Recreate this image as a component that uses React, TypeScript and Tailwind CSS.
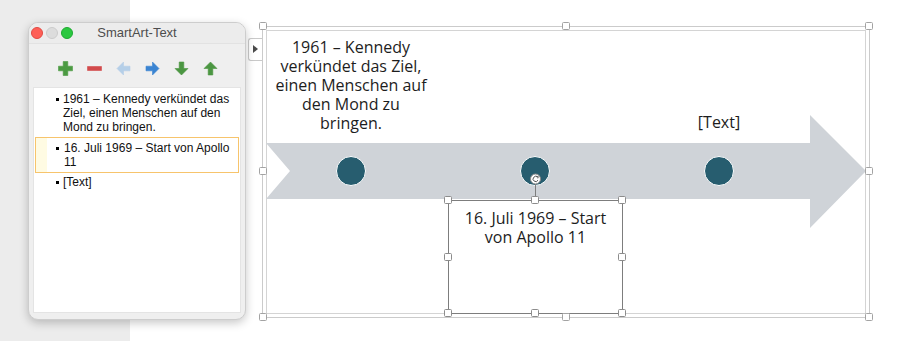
import React from "react";

const frameHandles: [number, number][] = [
  [263, 26], [566, 26], [869, 26],
  [263, 171], [869, 171],
  [263, 317], [566, 317], [869, 317],
];

const boxHandles: [number, number][] = [
  [448, 200], [535, 200], [622, 200],
  [448, 257], [622, 257],
  [448, 313], [535, 313], [622, 313],
];

function ToolIcon({ kind }: { kind: string }) {
  const paths: Record<string, { d: string; fill: string }> = {
    plus: { d: "M5.2 0.5 H9.8 V5.2 H14.5 V9.8 H9.8 V14.5 H5.2 V9.8 H0.5 V5.2 H5.2 Z", fill: "#4b9a42" },
    minus: { d: "M0.5 5.5 H14.5 V9.5 H0.5 Z", fill: "#d24a4c" },
    left: { d: "M14 5.2 H7.5 V1 L1 7.5 L7.5 14 V9.8 H14 Z", fill: "#b5cfe8" },
    right: { d: "M1 5.2 H7.5 V1 L14 7.5 L7.5 14 V9.8 H1 Z", fill: "#3a84d2" },
    down: { d: "M5.2 1 H9.8 V7.5 H14 L7.5 14 L1 7.5 H5.2 Z", fill: "#4b9642" },
    up: { d: "M5.2 14 H9.8 V7.5 H14 L7.5 1 L1 7.5 H5.2 Z", fill: "#4b9642" },
  };
  const p = paths[kind];
  return (
    <svg width="15" height="15" viewBox="0 0 15 15">
      <path d={p.d} fill={p.fill} stroke={p.fill} strokeWidth="0.6" strokeLinejoin="round" />
    </svg>
  );
}

function Bullet() {
  return <span className="absolute left-[22px] top-[6px] w-[3px] h-[3px] bg-black" />;
}

function TextPane() {
  return (
    <div className="absolute left-[28px] top-[22px] w-[218px] h-[298px] rounded-[10px] border border-[#cdcdcd] bg-[#efefef] shadow-[0_3px_10px_rgba(0,0,0,0.22)] overflow-hidden flex flex-col" style={{ fontFamily: '"Liberation Sans", Arial, sans-serif' }}>
      {/* title bar */}
      <div className="relative h-[21px] shrink-0 flex items-center justify-center border-b border-[#e2e2e2] bg-[#ececec]">
        <div className="absolute left-[2px] top-[4px] flex gap-[3px]">
          <span className="w-[12px] h-[12px] rounded-full bg-[#fe5f57] border border-[#e14942]" />
          <span className="w-[12px] h-[12px] rounded-full bg-[#dcdcdc] border border-[#cbcbcb]" />
          <span className="w-[12px] h-[12px] rounded-full bg-[#2bc840] border border-[#1eaa31]" />
        </div>
        <span className="text-[13px] text-[#4d4d4d]">SmartArt-Text</span>
      </div>
      {/* toolbar */}
      <div className="flex justify-center gap-[14px] pt-[17px] pb-[11px] pl-[1px]">
        <ToolIcon kind="plus" />
        <ToolIcon kind="minus" />
        <ToolIcon kind="left" />
        <ToolIcon kind="right" />
        <ToolIcon kind="down" />
        <ToolIcon kind="up" />
      </div>
      {/* outline */}
      <div className="ml-[4px] w-[208px] h-[226px] bg-white border border-[#e4e4e4] pt-[4px] text-[12px] leading-[14px] text-[#111]">
        <div className="relative pl-[29px] whitespace-nowrap">
          <Bullet />
          1961 – Kennedy verkündet das
          <br />
          Ziel, einen Menschen auf den
          <br />
          Mond zu bringen.
        </div>
        <div className="relative mx-[1px] mt-[3px] py-[3px] pl-[28px] border border-[#f7c46c] bg-[linear-gradient(to_right,#fffbe3_11px,#ffffff_11px)] whitespace-nowrap">
          <span className="absolute left-[20px] top-[9px] w-[3px] h-[3px] bg-black" />
          16. Juli 1969 – Start von Apollo
          <br />
          11
        </div>
        <div className="relative pl-[29px] mt-[2px] whitespace-nowrap">
          <Bullet />
          [Text]
        </div>
      </div>
    </div>
  );
}

export default function App() {
  return (
    <div className="relative w-[900px] h-[341px] flex overflow-hidden">
      <div className="w-[130px] bg-[#ececec]" />
      <div className="flex-1 bg-white" />

      {/* SmartArt frame */}
      <div className="absolute left-[262px] top-[26px] w-[608px] h-[292px] border border-[#cbcbcb] p-[3px]">
        <div className="h-full border border-[#d4d4d4]" />
      </div>

      {/* collapse tab */}
      <div className="absolute left-[248px] top-[38px] w-[14px] h-[23px] bg-white border border-[#c9c9c9] border-r-0 rounded-l-[3px] flex items-start justify-center pt-[6px]">
        <svg width="5" height="8" viewBox="0 0 5 8">
          <path d="M0 0 L5 4 L0 8 Z" fill="#4a4a4a" />
        </svg>
      </div>

      {/* timeline arrow */}
      <svg className="absolute left-0 top-0" width="900" height="341" viewBox="0 0 900 341">
        <path d="M266 143 H810 V115 L866 171 L810 228 V199 H266 L290 171 Z" fill="#cfd3d8" />
        <circle cx="351" cy="171" r="14.5" fill="#275d6f" stroke="#ffffff" strokeWidth="1" />
        <circle cx="535" cy="171" r="14.5" fill="#275d6f" stroke="#ffffff" strokeWidth="1" />
        <circle cx="719" cy="171" r="14.5" fill="#275d6f" stroke="#ffffff" strokeWidth="1" />
      </svg>

      {/* node texts */}
      <div className="absolute left-[256px] top-[38px] w-[190px] text-center text-[16px] leading-[19px] font-medium text-[#1d1d1d]" style={{ fontFamily: '"Open Sans", sans-serif' }}>
        1961 – Kennedy
        <br />
        verkündet das Ziel,
        <br />
        einen Menschen auf
        <br />
        den Mond zu
        <br />
        bringen.
      </div>
      <div className="absolute left-[669px] top-[113px] w-[100px] text-center text-[16px] leading-[19px] font-medium text-[#1d1d1d]" style={{ fontFamily: '"Open Sans", sans-serif' }}>
        [Text]
      </div>

      {/* selected text box */}
      <div className="absolute left-[448px] top-[200px] w-[175px] h-[114px] bg-white border border-[#7d7d7d] pt-[8px] text-center text-[16px] leading-[19px] font-medium text-[#1d1d1d]" style={{ fontFamily: '"Open Sans", sans-serif' }}>
        16. Juli 1969 – Start
        <br />
        von Apollo 11
      </div>

      {/* handles */}
      <svg className="absolute left-0 top-0 pointer-events-none" width="900" height="341" viewBox="0 0 900 341">
        <line x1="535.5" y1="184" x2="535.5" y2="200" stroke="#7d7d7d" strokeWidth="1" />
        <circle cx="535.5" cy="179" r="5" fill="#ffffff" stroke="#8a8a8a" strokeWidth="1" />
        <path d="M537.6 177.2 A2.6 2.6 0 1 0 538 180.2" fill="none" stroke="#555" strokeWidth="1" />
        <path d="M536.4 176.2 L538.3 176.6 L537.8 178.4" fill="none" stroke="#555" strokeWidth="0.9" />
        {frameHandles.map(([x, y]) => (
          <rect key={`f${x}-${y}`} x={x - 3.5} y={y - 3.5} width="7" height="7" rx="1" fill="#ffffff" stroke="#a3a3a3" strokeWidth="1" />
        ))}
        {boxHandles.map(([x, y]) => (
          <rect key={`b${x}-${y}`} x={x - 3.5} y={y - 3.5} width="7" height="7" rx="1" fill="#ffffff" stroke="#8c8c8c" strokeWidth="1" />
        ))}
      </svg>

      <TextPane />
    </div>
  );
}
